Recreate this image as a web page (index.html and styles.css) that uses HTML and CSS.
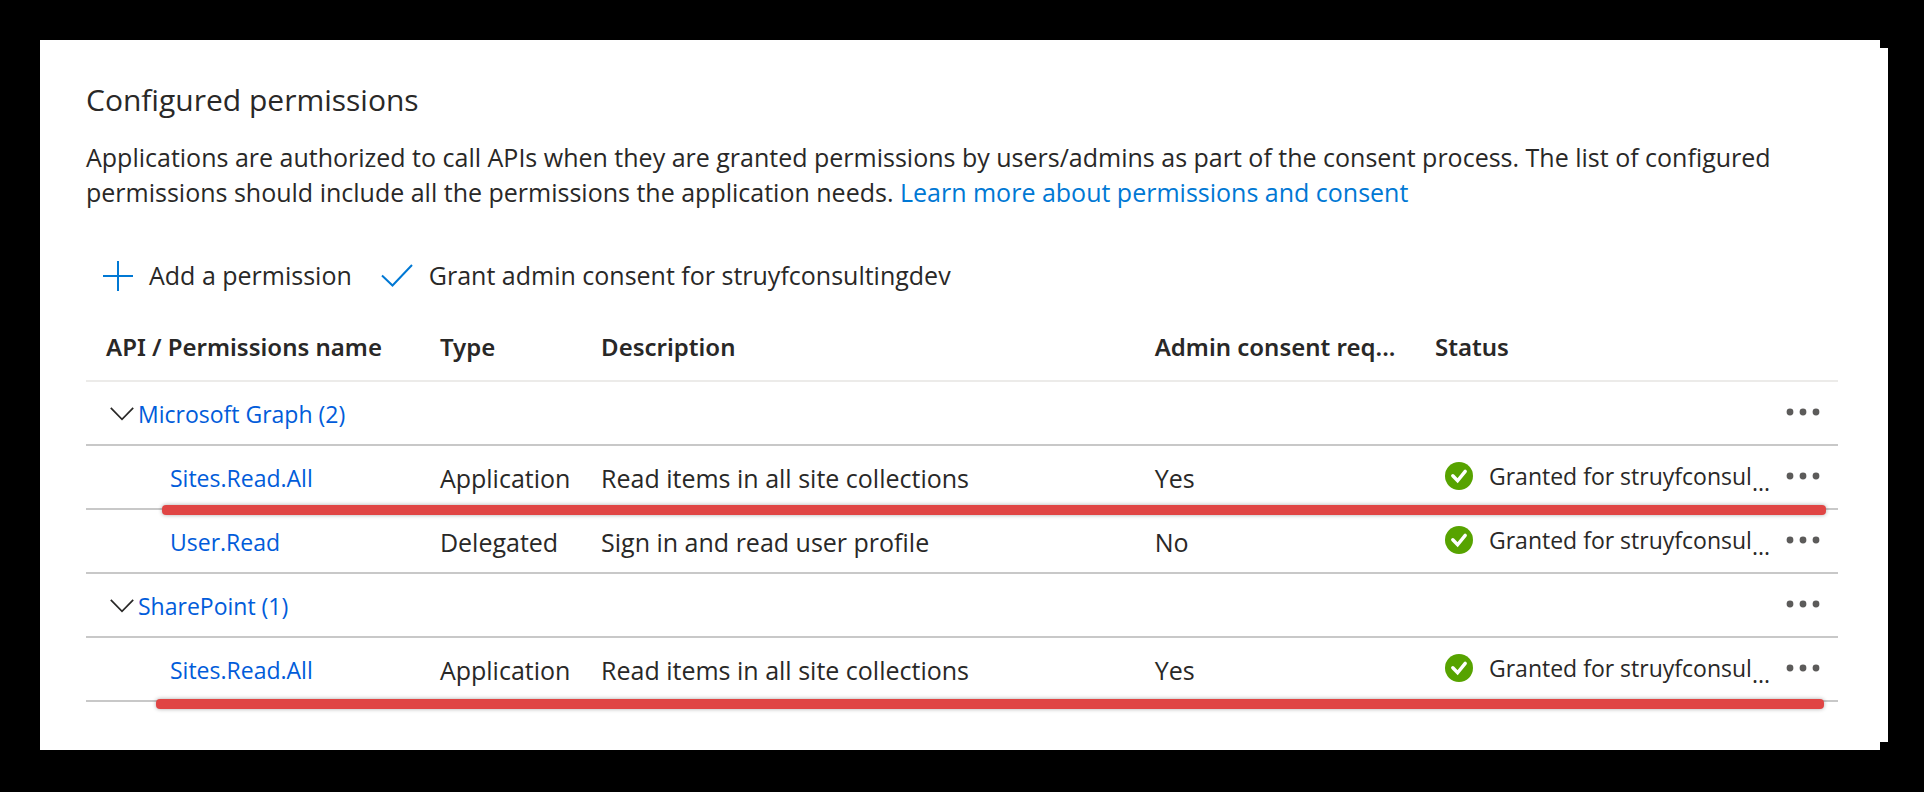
FILE: index.html
```html
<!DOCTYPE html>
<html lang="en">
<head>
<meta charset="utf-8">
<title>Configured permissions</title>
<link rel="stylesheet" href="styles.css">
</head>
<body>
<svg class="sprite" aria-hidden="true">
  <symbol id="dots" viewBox="0 0 34 8"><circle cx="4" cy="4" r="3.4"/><circle cx="17" cy="4" r="3.4"/><circle cx="30" cy="4" r="3.4"/></symbol>
  <symbol id="chevron" viewBox="0 0 24 14"><path d="M.8 .8 12 12.4 23.2 .8" fill="none" stroke="currentColor" stroke-width="1.7"/></symbol>
  <symbol id="granted" viewBox="0 0 28 28"><circle cx="14" cy="14" r="14" fill="#57a300"/><path d="M7.8 13.8 12.6 18.8 20.2 9.4" fill="none" stroke="#fff" stroke-width="3.4" stroke-linecap="round" stroke-linejoin="miter"/></symbol>
</svg>
<main class="card">
  <h1 class="title">Configured permissions</h1>
  <p class="intro">Applications are authorized to call APIs when they are granted permissions by users/admins as part of the consent process. The list of configured permissions should include all the permissions the application needs. <a class="learn" href="#">Learn more about permissions and consent</a></p>
  <div class="toolbar">
    <button class="command" type="button"><svg class="plus" viewBox="0 0 30 30" aria-hidden="true"><path d="M15 0V30M0 15H30"/></svg>Add a permission</button>
    <button class="command" type="button"><svg class="check" viewBox="0 0 32 24" aria-hidden="true"><path d="M1 11.5 11.5 21.5 31 1"/></svg>Grant admin consent for struyfconsultingdev</button>
  </div>
  <table class="grid">
    <colgroup><col class="col-name"><col class="col-type"><col class="col-description"><col class="col-consent"><col class="col-status"><col class="col-menu"></colgroup>
    <thead>
      <tr><th>API / Permissions name</th><th>Type</th><th>Description</th><th>Admin consent req...</th><th>Status</th><th aria-label="Actions"></th></tr>
    </thead>
    <tbody>
      <tr>
        <td colspan="5"><div class="group"><svg class="chevron" aria-hidden="true"><use href="#chevron"/></svg><a class="name" href="#">Microsoft Graph (2)</a></div></td>
        <td><button class="menu" type="button" aria-label="More"><svg class="dots"><use href="#dots"/></svg></button></td>
      </tr>
      <tr class="marked">
        <td class="child"><a class="name" href="#">Sites.Read.All</a><span class="marker"></span></td>
        <td>Application</td><td>Read items in all site collections</td><td>Yes</td>
        <td><div class="status"><svg class="granted" aria-hidden="true"><use href="#granted"/></svg><span>Granted for struyfconsul<span class="more">...</span></span></div></td>
        <td><button class="menu" type="button" aria-label="More"><svg class="dots"><use href="#dots"/></svg></button></td>
      </tr>
      <tr>
        <td class="child"><a class="name" href="#">User.Read</a></td>
        <td>Delegated</td><td>Sign in and read user profile</td><td>No</td>
        <td><div class="status"><svg class="granted" aria-hidden="true"><use href="#granted"/></svg><span>Granted for struyfconsul<span class="more">...</span></span></div></td>
        <td><button class="menu" type="button" aria-label="More"><svg class="dots"><use href="#dots"/></svg></button></td>
      </tr>
      <tr>
        <td colspan="5"><div class="group"><svg class="chevron" aria-hidden="true"><use href="#chevron"/></svg><a class="name" href="#">SharePoint (1)</a></div></td>
        <td><button class="menu" type="button" aria-label="More"><svg class="dots"><use href="#dots"/></svg></button></td>
      </tr>
      <tr class="marked">
        <td class="child"><a class="name" href="#">Sites.Read.All</a><span class="marker marker-last"></span></td>
        <td>Application</td><td>Read items in all site collections</td><td>Yes</td>
        <td><div class="status"><svg class="granted" aria-hidden="true"><use href="#granted"/></svg><span>Granted for struyfconsul<span class="more">...</span></span></div></td>
        <td><button class="menu" type="button" aria-label="More"><svg class="dots"><use href="#dots"/></svg></button></td>
      </tr>
    </tbody>
  </table>
</main>
</body>
</html>
```

FILE: styles.css
```css
* { box-sizing: border-box; }

body {
  margin: 0;
  padding: 40px 36px 40px 40px;
  background: #000;
  color: #292827;
  font: 25px/35px "Open Sans", "Noto Sans", sans-serif;
}

.sprite { display: none; }

.card {
  padding: 38px 50px 48px 46px;
  background: #fff;
  clip-path: polygon(0 0, calc(100% - 8px) 0, calc(100% - 8px) 8px, 100% 8px, 100% calc(100% - 8px), calc(100% - 8px) calc(100% - 8px), calc(100% - 8px) 100%, 0 100%);
}

.title { margin: 0; font-size: 30px; font-weight: 400; line-height: 44px; }
.intro { margin: 18px 0 0; }

a { text-decoration: none; }
.learn { color: #0078d4; }
.name { color: #015cda; font-size: 23px; }

.toolbar { display: flex; gap: 29px; margin-top: 48px; padding-left: 17px; }
.command {
  display: flex;
  align-items: center;
  gap: 16px;
  padding: 0;
  border: 0;
  background: none;
  color: inherit;
  font: inherit;
}
.command path { fill: none; stroke: #0078d4; stroke-width: 2; }
.plus { width: 30px; height: 30px; }
.check { width: 32px; height: 24px; }

.grid {
  width: 100%;
  margin-top: 20px;
  table-layout: fixed;
  border-collapse: separate;
  border-spacing: 0;
}
.col-name { width: 20.2%; }
.col-type { width: 9.2%; }
.col-description { width: 31.6%; }
.col-consent { width: 16%; }
.col-status { width: 19.4%; }

th, td { height: 64px; padding: 0; text-align: left; white-space: nowrap; }
th {
  height: 69px;
  border-bottom: 2px solid #ecebe9;
  font-family: "Noto Sans", "Open Sans", sans-serif;
  font-size: 24px;
  font-weight: 600;
}
th:first-child { padding-left: 20px; }
td { padding-top: 2px; border-bottom: 2px solid #c8c8c8; }

.group { display: flex; align-items: center; gap: 4px; padding-left: 24px; }
.chevron { width: 24px; height: 14px; }
.child { padding-left: 84px; }

.status { display: flex; align-items: center; gap: 16px; padding: 0 0 4px 10px; font-size: 23px; }
.granted { width: 28px; height: 28px; }
.more { vertical-align: sub; line-height: 1; }

.menu { display: block; padding: 0 0 4px 11px; border: 0; background: none; }
.dots { display: block; width: 34px; height: 8px; fill: #5c5b5a; }

.marked { position: relative; }
.marker {
  position: absolute;
  right: 12px;
  bottom: -5px;
  left: 76px;
  height: 10px;
  border-radius: 4px;
  background: #e04544;
  box-shadow: 0 0 4px #0005;
}
.marker-last { right: 14px; bottom: -7px; left: 70px; }
```
